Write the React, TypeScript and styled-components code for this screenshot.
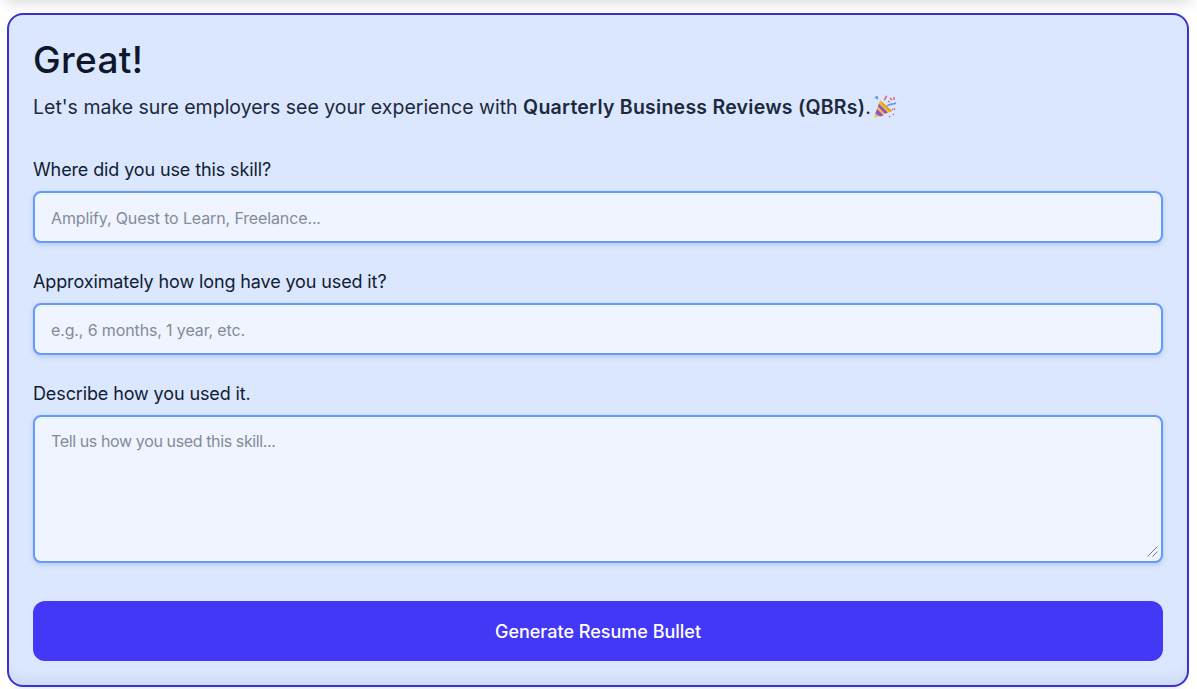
import styled, { createGlobalStyle } from "styled-components";

const GlobalStyle = createGlobalStyle`
    html, body {
        margin: 0;
        padding: 0;
        background-color: #ffffff;
        overflow: hidden;
    }
    * {
        box-sizing: border-box;
    }
`;

const Page = styled.div`
    width: 1197px;
    height: 689px;
    overflow: hidden;
    font-family: Inter, "Liberation Sans", sans-serif;
`;

const PreviousCard = styled.div`
    height: 20px;
    margin: -20px 6px 0;
    box-shadow: 0 3px 14px rgba(0, 0, 0, 0.14);
`;

const Card = styled.form`
    margin: 13px 8px 0 7px;
    height: 674px;
    padding: 23px 24px 0;
    border: 2px solid #3a30d6;
    border-radius: 16px;
    background-color: #dbe7fe;
    box-shadow: inset 0 -14px 14px -10px rgba(30, 50, 110, 0.09), 0 9px 8px -7px rgba(30, 50, 110, 0.12);
`;

const Title = styled.h1`
    margin: 0;
    font-size: 37px;
    line-height: 44px;
    font-weight: 500;
    letter-spacing: 0.35px;
    color: #0f172a;
`;

const Intro = styled.p`
    margin: 11px 0 0;
    display: flex;
    align-items: center;
    height: 28px;
    font-size: 19.5px;
    line-height: 28px;
    letter-spacing: 0;
    color: #1e293b;
    white-space: pre;

    strong {
        font-weight: 600;
        letter-spacing: 0.25px;
    }
`;

const Popper = styled.svg`
    width: 25px;
    height: 24px;
    margin-left: 1px;
`;

const Field = styled.div`
    margin-top: ${(props: { $first?: boolean }) => (props.$first ? "37px" : "27px")};
`;

const Label = styled.label`
    display: block;
    font-size: 18px;
    line-height: 24px;
    letter-spacing: -0.12px;
    color: #111c33;
    margin-bottom: 9px;
`;

const Input = styled.input`
    display: block;
    width: 100%;
    height: 52px;
    padding: 2px 16px 0;
    border: 2px solid #619bfb;
    border-radius: 8px;
    background-color: #eff4ff;
    box-shadow: 0 2px 5px rgba(40, 60, 120, 0.18);
    font-family: inherit;
    font-size: 16px;
    letter-spacing: -0.13px;
    outline: none;

    &::placeholder {
        color: #858b98;
        opacity: 1;
    }
`;

const TextAreaWrap = styled.div`
    position: relative;
`;

const TextArea = styled.textarea`
    display: block;
    width: 100%;
    height: 148px;
    padding: 13px 16px;
    border: 2px solid #619bfb;
    border-radius: 8px;
    background-color: #eff4ff;
    box-shadow: 0 2px 5px rgba(40, 60, 120, 0.18);
    font-family: inherit;
    font-size: 16px;
    line-height: 22px;
    letter-spacing: -0.38px;
    outline: none;
    resize: none;

    &::placeholder {
        color: #858b98;
        opacity: 1;
    }
`;

const ResizeGrip = styled.svg`
    position: absolute;
    right: 5px;
    bottom: 6px;
    width: 11px;
    height: 11px;
`;

const SubmitButton = styled.button`
    display: block;
    width: 100%;
    height: 60px;
    margin-top: 38px;
    border: none;
    border-radius: 12px;
    background-color: #4338f5;
    color: #ffffff;
    font-family: inherit;
    font-size: 18px;
    font-weight: 450;
    letter-spacing: 0;
`;

const App = () => {
    return (
        <Page>
            <GlobalStyle />
            <PreviousCard />
            <Card>
                <Title>Great!</Title>
                <Intro>
                    Let's make sure employers see your experience with <strong>Quarterly Business Reviews (QBRs)</strong>.
                    <Popper viewBox="0 0 25 24" aria-hidden="true">
                        <path d="M2 23 L8 5 L20 16 Z" fill="#f4bd38" />
                        <path d="M5 14 L11.5 20.4 L8 21.4 L3.4 18.6 Z" fill="#8a55c8" />
                        <path d="M7 8.8 L15.8 17.6 L13 18.8 L6 11.6 Z" fill="#8a55c8" />
                        <path d="M9 6 L20 16 L18 17 L10 9 Z" fill="#e09a28" />
                        <path d="M12 5 C14 4 13 2 15 1" stroke="#d8607a" strokeWidth="1.5" fill="none" />
                        <path d="M15 11 C18 8 21 10 24 8" stroke="#5a9be8" strokeWidth="1.6" fill="none" />
                        <path d="M3 2 L6 4 M5 1 L5 3" stroke="#4a90e2" strokeWidth="1.4" />
                        <path d="M18 3 L20 5 M22 2 L22 5" stroke="#d8607a" strokeWidth="1.4" />
                        <path d="M16 6 L18 7 M22 13 L23 15 M20 14 L21 15" stroke="#d8607a" strokeWidth="1.2" />
                        <path d="M21 19 L22 20 M17 21 L18 22" stroke="#c76a9a" strokeWidth="1.3" />
                    </Popper>
                </Intro>
                <Field $first>
                    <Label>Where did you use this skill?</Label>
                    <Input placeholder="Amplify, Quest to Learn, Freelance..." />
                </Field>
                <Field>
                    <Label>Approximately how long have you used it?</Label>
                    <Input placeholder="e.g., 6 months, 1 year, etc." />
                </Field>
                <Field>
                    <Label>Describe how you used it.</Label>
                    <TextAreaWrap>
                        <TextArea placeholder="Tell us how you used this skill..." />
                        <ResizeGrip viewBox="0 0 11 11" aria-hidden="true">
                            <path d="M0.5 10.5 L10.5 0.5 M5.5 10.5 L10.5 5.5" stroke="#77797f" strokeWidth="1" fill="none" />
                        </ResizeGrip>
                    </TextAreaWrap>
                </Field>
                <SubmitButton type="button">Generate Resume Bullet</SubmitButton>
            </Card>
        </Page>
    );
};

export default App;
